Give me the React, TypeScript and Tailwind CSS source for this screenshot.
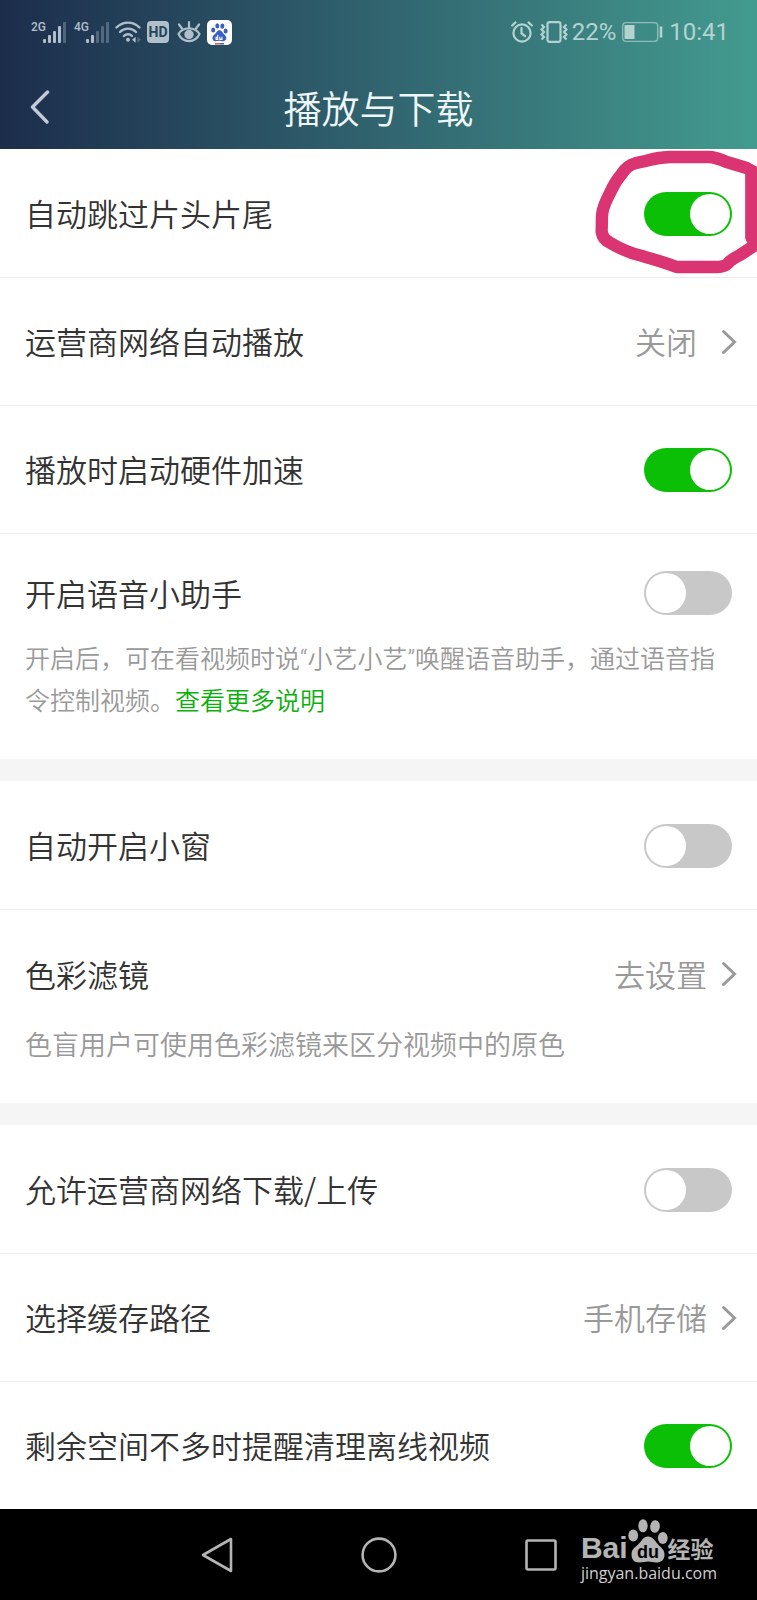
import React, { useId, useState } from 'react';

function SignalBars({ strong }: { strong: number }) {
  const heights = [4, 8, 12, 17, 21];
  return (
    <svg width="23" height="21" viewBox="0 0 23 21" fill="currentColor">
      {heights.map((h, i) => (
        <rect key={h} x={i * 5} y={21 - h} width="3" height={h} rx="1" opacity={i < strong ? 1 : 0.35} />
      ))}
    </svg>
  );
}

function Signal({ name, strong }: { name: string; strong: number }) {
  return (
    <div className="flex items-start">
      <span className="w-3 font-['Roboto',sans-serif] text-[12px] leading-[10px] font-medium">{name}</span>
      <SignalBars strong={strong} />
    </div>
  );
}

function WifiIcon() {
  return (
    <svg width="26" height="22" viewBox="0 0 26 22" fill="none" stroke="currentColor" strokeWidth="2.4" strokeLinecap="round">
      <path d="M1.5 6.5C8 0 18 0 24.5 6.5" />
      <path d="M5 11C9.5 6.5 16.5 6.5 21 11" />
      <path d="M8.8 15C11.3 12.6 14.7 12.6 17 15" />
      <circle cx="13" cy="18.8" r="2" fill="currentColor" stroke="none" />
      <path d="M17 18.8l3.6-3v6z" fill="currentColor" stroke="none" />
      <path d="M26 18.8l-3.6-3v6z" fill="currentColor" stroke="none" opacity="0.35" />
    </svg>
  );
}

function EyeIcon() {
  return (
    <svg width="24" height="22" viewBox="0 0 24 22" fill="none" stroke="currentColor" strokeWidth="2.2" strokeLinecap="round">
      <path d="M1.5 13C6 5.5 18 5.5 22.5 13C18 22.5 6 22.5 1.5 13Z" />
      <circle cx="12" cy="13.5" r="3.6" fill="currentColor" />
      <path d="M12 1.2v5M2 3.5l3 4M22 3.5l-3 4" />
    </svg>
  );
}

function Paw() {
  return (
    <>
      <ellipse cx="5.2" cy="16.5" rx="4.9" ry="6" />
      <ellipse cx="15" cy="6.8" rx="4.7" ry="6.5" />
      <ellipse cx="27" cy="7.5" rx="4.8" ry="6.3" transform="rotate(8 27 7.5)" />
      <ellipse cx="34.8" cy="19" rx="4.9" ry="6" />
      <path d="M20 17.5C25 17.5 27 22 31 26.500C34 29.500 36.500 31 36.500 36C36.500 41 33 43.500 28 43.500C25 43.500 23 42.500 20 42.500C17 42.500 15 43.500 11 43.500C6 43.500 3.500 40 3.500 35.500C3.500 31 6 29 9 26.500C14 22 15 17.500 20 17.500Z" />
    </>
  );
}

function BaiduAppIcon() {
  return (
    <svg width="25" height="25" viewBox="0 0 25 25">
      <rect width="25" height="25" rx="5" fill="#fff" />
      <g transform="translate(4 3) scale(.42)" fill="#3b5fc4">
        <Paw />
        <path d="M16 28v11h-4v-5h4M21 33v6h5v-6" fill="none" stroke="#fff" strokeWidth="2.5" />
      </g>
      <path d="M8 23.8h5" stroke="#d9534f" strokeWidth="1.5" />
      <path d="M13 23.8h4" stroke="#3b5fc4" strokeWidth="1.5" />
    </svg>
  );
}

function AlarmIcon() {
  return (
    <svg width="22" height="22" viewBox="0 0 22 22" fill="none" stroke="currentColor" strokeWidth="2.2" strokeLinecap="round">
      <circle cx="11" cy="12" r="8.6" />
      <path d="M10.5 7v5.5l3.5 2.5M1.2 4.5L4.5 1.4M20.8 4.5L17.5 1.4" />
    </svg>
  );
}

function VibrateIcon() {
  return (
    <svg width="28" height="22" viewBox="0 0 28 22" fill="none" stroke="currentColor" strokeWidth="2.2">
      <rect x="7.5" y="1.2" width="13" height="19.6" rx="2" />
      <path d="M1.5 3.5l2.5 2.5l-2.5 2.5l2.5 2.5l-2.5 2.5l2.5 2.5l-2.5 2.5" />
      <path d="M26.5 3.5l-2.5 2.5l2.5 2.5l-2.5 2.5l2.5 2.5l-2.5 2.5l2.5 2.5" />
    </svg>
  );
}

function BatteryIcon() {
  return (
    <svg width="41" height="20" viewBox="0 0 41 20" fill="none" stroke="currentColor">
      <rect x=".7" y=".7" width="35" height="18.6" rx="3" strokeWidth="1.3" opacity="0.7" />
      <rect x="2.5" y="3" width="10" height="14" fill="currentColor" stroke="none" />
      <path d="M39 4.5v11" strokeWidth="2.6" />
    </svg>
  );
}

function ChevronIcon() {
  return (
    <svg width="16" height="26" viewBox="0 0 16 26" fill="none" stroke="#999" strokeWidth="3" strokeLinecap="round">
      <path d="M2.5 2.5L13.5 13L2.5 23.5" />
    </svg>
  );
}

function Header() {
  return (
    <header className="h-[149px] bg-linear-to-r from-[#1c2d4c] via-[#31646f] to-[#439b8f]">
      <div className="flex h-16 items-center justify-between pr-7 pl-[31px]">
        <div className="flex items-center text-[#b0bfca]">
          <Signal name="2G" strong={4} />
          <div className="ml-2">
            <Signal name="4G" strong={2} />
          </div>
          <div className="ml-1.5 flex items-center gap-[6px]">
            <WifiIcon />
            <span className="flex h-[22px] w-[22px] items-center justify-center rounded-sm bg-current">
              <span className="font-['Roboto',sans-serif] text-[14px] leading-none font-bold text-[#23465a]">HD</span>
            </span>
            <span className="ml-0.5">
              <EyeIcon />
            </span>
            <BaiduAppIcon />
          </div>
        </div>
        <div className="flex items-center font-['Roboto',sans-serif] text-[24px] text-[#b3d3d1]">
          <AlarmIcon />
          <span className="ml-[7px]">
            <VibrateIcon />
          </span>
          <span className="ml-1">22%</span>
          <span className="ml-1.5">
            <BatteryIcon />
          </span>
          <span className="ml-1.5">10:41</span>
        </div>
      </div>
      <div className="relative flex h-[85px] items-center justify-center">
        <button type="button" aria-label="返回" className="absolute left-[30px] text-[#c3cbd6]">
          <svg width="20" height="34" viewBox="0 0 20 34" fill="none" stroke="currentColor" strokeWidth="3.4" strokeLinecap="round" strokeLinejoin="round">
            <path d="M17.5 2L2.5 17L17 32" />
          </svg>
        </button>
        <h1 className="text-[38px] font-[350] text-[#eef6f7]">播放与下载</h1>
      </div>
    </header>
  );
}

type SwitchLineProps = { label: string; on?: boolean };

function SwitchLine({ label, on = false }: SwitchLineProps) {
  const id = useId();
  const [checked, setChecked] = useState(on);

  return (
    <div className="flex h-11 items-center justify-between px-[25px]">
      <label htmlFor={id} className="text-[31px] font-[350] text-[#333]">
        {label}
      </label>
      <input
        id={id}
        type="checkbox"
        checked={checked}
        onChange={(e) => setChecked(e.target.checked)}
        className="flex h-11 w-[88px] shrink-0 appearance-none items-center rounded-full bg-[#c8c8c8] px-0.5 before:size-10 before:rounded-full before:bg-white before:content-[''] checked:justify-end checked:bg-[#0bbf06]"
      />
    </div>
  );
}

function LinkLine({ label, value, wide = false }: { label: string; value: string; wide?: boolean }) {
  return (
    <button type="button" className="flex h-11 w-full items-center justify-between pr-5 pl-[25px] text-[31px] font-[350]">
      <span className="text-[#333]">{label}</span>
      <span className={wide ? 'flex items-center gap-6 text-[#999]' : 'flex items-center gap-3.5 text-[#999]'}>
        {value}
        <ChevronIcon />
      </span>
    </button>
  );
}

function Row({ children }: { children: React.ReactNode }) {
  return (
    <div className="flex h-32 flex-col justify-center border-t border-[#ebebeb] first:border-transparent">
      {children}
    </div>
  );
}

// hand-drawn ring around the first switch
function Marker() {
  return (
    <svg className="pointer-events-none absolute top-0 right-0" width="187" height="130" viewBox="0 27 561 390" fill="none" stroke="#da3572" strokeWidth="37" strokeLinejoin="round">
      <path d="M575 110L530 84L470 66Q435 51 415 51H300Q260 53 230 62L195 70Q170 77 155 102Q135 125 122 155Q98 200 96 225L95 275Q98 298 120 308Q170 338 220 349Q280 366 320 381H440Q465 380 474 370Q485 357 510 345L570 306" />
      <path d="M544 95V292L556 316" />
    </svg>
  );
}

function NavBar() {
  return (
    <nav className="relative flex h-[91px] items-center justify-center bg-black text-[#b4b4b4]">
      <button type="button" aria-label="返回" className="flex w-[162px] justify-center">
        <svg width="32" height="36" viewBox="0 0 32 36" fill="none" stroke="currentColor" strokeWidth="2.6" strokeLinejoin="round">
          <path d="M30 2V34L2 18Z" />
        </svg>
      </button>
      <button type="button" aria-label="主页" className="flex w-[162px] justify-center">
        <svg width="36" height="36" viewBox="0 0 36 36" fill="none" stroke="currentColor" strokeWidth="2.6">
          <circle cx="18" cy="18" r="16.4" />
        </svg>
      </button>
      <button type="button" aria-label="最近任务" className="flex w-[162px] justify-center">
        <svg width="32" height="32" viewBox="0 0 32 32" fill="none" stroke="currentColor" strokeWidth="2.6">
          <rect x="1.5" y="1.5" width="29" height="29" rx="1.5" />
        </svg>
      </button>
      <div className="absolute top-2 right-10">
        <div className="flex h-[46px] items-end">
          <span className="font-['Liberation_Sans',sans-serif] text-[30px] leading-[30px] font-bold">Bai</span>
          <svg width="40" height="44" viewBox="0 0 40 44" fill="currentColor">
            <Paw />
            <text x="20" y="39" textAnchor="middle" fontFamily="Liberation Sans, sans-serif" fontSize="18" fontWeight="700" fill="#000">
              du
            </text>
          </svg>
          <span className="text-[23px] leading-[30px] font-bold">经验</span>
        </div>
        <div className="font-['Open_Sans',sans-serif] text-[16px] leading-5 text-[#d0d0d0]">jingyan.baidu.com</div>
      </div>
    </nav>
  );
}

export default function App() {
  return (
    <div className="w-full bg-[#f5f5f5] font-['Noto_Sans_CJK_SC',sans-serif]">
      <Header />

      <main className="flex flex-col gap-[22px]">
        <section className="relative bg-white">
          <Row>
            <SwitchLine label="自动跳过片头片尾" on />
          </Row>
          <Row>
            <LinkLine label="运营商网络自动播放" value="关闭" wide />
          </Row>
          <Row>
            <SwitchLine label="播放时启动硬件加速" on />
          </Row>
          <div className="border-t border-[#ebebeb] pt-[37px] pb-9">
            <SwitchLine label="开启语音小助手" />
            <p className="mt-6 px-[25px] font-['Roboto','Noto_Sans_CJK_SC',sans-serif] text-[25px] leading-[42px] font-[350] text-[#999]">
              开启后，可在看视频时说“小艺小艺”唤醒语音助手，通过语音指令控制视频。
              <a href="#voice" className="text-[#0bb00b]">查看更多说明</a>
            </p>
          </div>
          <Marker />
        </section>

        <section className="bg-white">
          <Row>
            <SwitchLine label="自动开启小窗" />
          </Row>
          <div className="border-t border-[#ebebeb] pt-[42px] pb-[38px]">
            <LinkLine label="色彩滤镜" value="去设置" />
            <p className="mt-[27px] px-[25px] text-[27px] leading-[42px] font-[350] text-[#999]">
              色盲用户可使用色彩滤镜来区分视频中的原色
            </p>
          </div>
        </section>

        <section className="bg-white">
          <Row>
            <SwitchLine label="允许运营商网络下载/上传" />
          </Row>
          <Row>
            <LinkLine label="选择缓存路径" value="手机存储" />
          </Row>
          <Row>
            <SwitchLine label="剩余空间不多时提醒清理离线视频" on />
          </Row>
        </section>
      </main>

      <NavBar />
    </div>
  );
}
